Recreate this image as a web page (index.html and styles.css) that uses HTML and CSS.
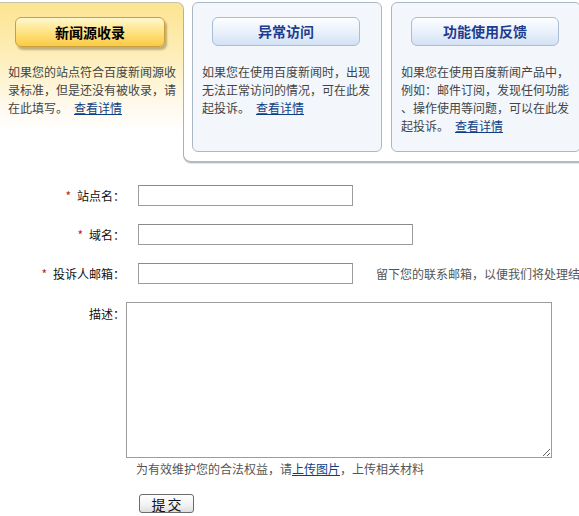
FILE: index.html
```html
<!DOCTYPE html>
<html lang="zh-CN">
<head>
<meta charset="utf-8">
<title>投诉</title>
<link rel="stylesheet" href="styles.css">
</head>
<body>
<div class="page">
  <div class="tabs">
    <div class="tab-active">
      <div class="btn-yellow">新闻源收录</div>
      <p class="desc">如果您的站点符合百度新闻源收录标准，但是还没有被收录，请在此填写。<a class="more" href="#">查看详情</a></p>
    </div>
    <div class="panel">
      <div class="card">
        <div class="btn-blue">异常访问</div>
        <p class="desc">如果您在使用百度新闻时，出现无法正常访问的情况，可在此发起投诉。<a class="more" href="#">查看详情</a></p>
      </div>
      <div class="card">
        <div class="btn-blue">功能使用反馈</div>
        <p class="desc">如果您在使用百度新闻产品中，例如：邮件订阅，发现任何功能<br>、操作使用等问题，可以在此发起投诉。<a class="more" href="#">查看详情</a></p>
      </div>
    </div>
  </div>

  <form class="form">
    <div class="row">
      <label class="label"><span class="req">*</span>站点名：</label>
      <input class="field field-short" type="text">
    </div>
    <div class="row">
      <label class="label"><span class="req">*</span>域名：</label>
      <input class="field field-long" type="text">
    </div>
    <div class="row">
      <label class="label"><span class="req">*</span>投诉人邮箱：</label>
      <input class="field field-short" type="text">
      <span class="hint">留下您的联系邮箱，以便我们将处理结果通知您</span>
    </div>
    <div class="row row-top">
      <label class="label label-top">描述：</label>
      <textarea class="area"></textarea>
    </div>
    <p class="note">为有效维护您的合法权益，请<a class="upload" href="#">上传图片</a>，上传相关材料</p>
    <button class="submit" type="button">提交</button>
  </form>
</div>
</body>
</html>
```

FILE: styles.css
```css
html, body {
  margin: 0;
  padding: 0;
  overflow: hidden;
  background: #fff;
}
body {
  font-family: "Noto Sans CJK SC", "Noto Sans", sans-serif;
  font-size: 12px;
  line-height: 18px;
  color: #222;
}
.page {
  width: 579px;
  overflow: hidden;
}
.tabs {
  display: flex;
  align-items: flex-start;
  padding-top: 2px;
}
.tab-active {
  flex-shrink: 0;
  width: 184px;
  height: 152px;
  box-sizing: border-box;
  border-top: 1px solid #c9c3a8;
  border-right: 1px solid #b0b6bb;
  border-top-right-radius: 7px;
  background: linear-gradient(#fde492 0%, #fdeeb9 35%, #fffaf0 70%, #ffffff 85%);
  padding: 14px 8px 0 8px;
}
.btn-yellow {
  margin-left: 7px;
  width: 150px;
  height: 30px;
  box-sizing: border-box;
  border: 1px solid #c9a040;
  border-radius: 6px;
  background: linear-gradient(#fff7cf 0%, #ffe58a 45%, #fbcb45 100%);
  box-shadow: 2px 3px 2px rgba(120, 100, 60, 0.45);
  text-align: center;
  font-size: 14px;
  font-weight: bold;
  line-height: 28px;
  color: #000;
}
.tab-active .desc {
  margin: 16px 0 0 0;
  width: 170px;
}
.desc {
  color: #444;
  line-break: anywhere;
}
.more {
  margin-left: 6px;
  color: #0e3f86;
  text-decoration: underline;
}
.panel {
  flex-shrink: 0;
  display: flex;
  gap: 9px;
  margin-left: -1px;
  margin-top: 8px;
  width: 420px;
  padding: 0 0 9px 8px;
  border-left: 1px solid #a9b2b8;
  border-bottom: 2px solid #b3bbc1;
  border-bottom-left-radius: 8px;
  box-shadow: 0 1px 0 #e3e7ea;
}
.card {
  flex-shrink: 0;
  margin-top: -8px;
  width: 190px;
  height: 150px;
  box-sizing: border-box;
  border: 1px solid #a8b8c5;
  border-radius: 6px;
  background: #f3f7fc;
  padding: 14px 9px 0 9px;
}
.btn-blue {
  margin-left: 10px;
  width: 148px;
  height: 29px;
  box-sizing: border-box;
  border: 1px solid #a9bdd6;
  border-radius: 6px;
  background: linear-gradient(#fdfeff 0%, #eaf1fb 50%, #d2e1f4 100%);
  text-align: center;
  font-size: 14px;
  font-weight: bold;
  line-height: 27px;
  color: #1d3c8f;
}
.card .desc {
  margin: 17px 0 0 0;
  width: 170px;
}

.form {
  margin: 0;
  padding-top: 22px;
}
.row {
  display: flex;
  align-items: center;
  margin-bottom: 18px;
  white-space: nowrap;
}
.row-top {
  align-items: flex-start;
  margin-bottom: 0;
}
.label {
  flex-shrink: 0;
  width: 125px;
  text-align: right;
  color: #111;
}
.label-top {
  padding-top: 3px;
}
.req {
  color: #c0202a;
  margin-right: 6px;
}
.field {
  flex-shrink: 0;
  margin: 0 0 0 13px;
  height: 21px;
  box-sizing: border-box;
  border: 1px solid #9c9c9c;
  border-top-color: #8a8a8a;
  padding: 0 2px;
  font-size: 12px;
}
.field-short {
  width: 215px;
}
.field-long {
  width: 275px;
}
.hint {
  flex-shrink: 0;
  margin-left: 23px;
  color: #555;
}
.area {
  flex-shrink: 0;
  margin: 0 0 0 1px;
  width: 426px;
  height: 156px;
  box-sizing: border-box;
  border: 1px solid #9c9c9c;
  padding: 2px;
  font-size: 12px;
}
.note {
  margin: 2px 0 0 136px;
  color: #555;
  white-space: nowrap;
}
.upload {
  color: #0e3f86;
  text-decoration: underline;
}
.submit {
  display: block;
  margin: 16px 0 0 139px;
  width: 55px;
  height: 19px;
  box-sizing: border-box;
  padding: 0 0 0 2px;
  border: 1px solid #6b6b6b;
  border-radius: 3px;
  background: linear-gradient(#ffffff 0%, #f2f2f2 60%, #dedede 100%);
  font-family: "Noto Sans CJK SC", sans-serif;
  font-size: 14px;
  line-height: 16px;
  letter-spacing: 2px;
  color: #111;
}
```
